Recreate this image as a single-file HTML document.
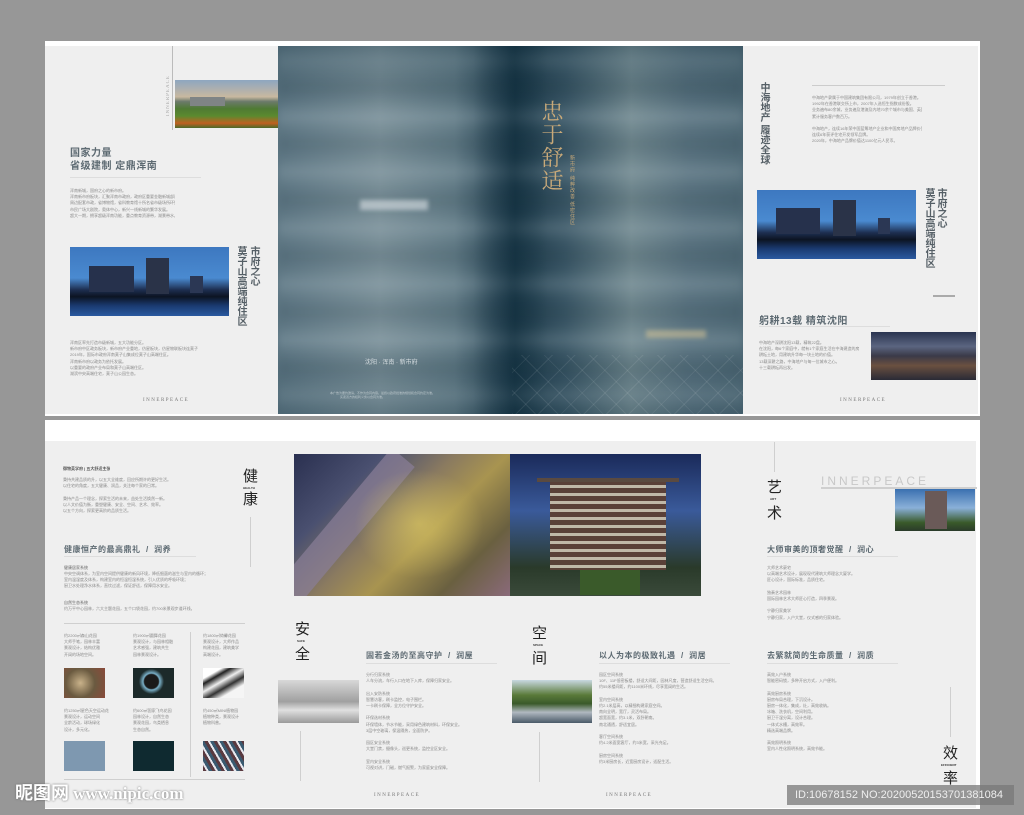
<!DOCTYPE html>
<html><head><meta charset="utf-8"><style>
*{margin:0;padding:0;box-sizing:border-box}
body{width:1024px;height:815px;background:#979797;position:relative;overflow:hidden;font-family:"Liberation Sans","Noto Sans CJK SC",sans-serif}
.a{position:absolute}
.t{position:absolute;font-size:4px;line-height:6.2px;color:#8a8a8a;white-space:nowrap;overflow:hidden}
.h{position:absolute;font-size:9px;color:#5d6a72;font-weight:bold;white-space:nowrap;letter-spacing:.5px}
.v{position:absolute;writing-mode:vertical-rl;color:#555f66;font-weight:bold;font-size:10px;line-height:11px;letter-spacing:0}
.ln{position:absolute;background:#cfcfcf;height:1px}
.vl{position:absolute;background:#cfcfcf;width:1px}
.big{position:absolute;font-size:15px;color:#222;font-family:"Noto Sans CJK SC",sans-serif;line-height:15px}
.logo{position:absolute;font-family:"Liberation Serif",serif;font-size:5px;letter-spacing:1.5px;color:#777}
.sm{position:absolute;font-size:3px;color:#333;font-weight:bold}
</style></head><body>
<div class="a" style="left:45px;top:41px;width:935px;height:375px;background:#fff"></div>
<div class="a" style="left:45px;top:46px;width:933px;height:368px;background:#efefef"></div>
<div class="a" style="left:45px;top:420px;width:935px;height:389px;background:#fff"></div>
<div class="a" style="left:45px;top:441px;width:931px;height:367px;background:#efefef"></div>

<!-- LEFT PAGE -->
<div class="vl" style="left:172px;top:46px;height:84px;background:#bbb"></div>
<div class="a" style="left:166px;top:75px;writing-mode:vertical-rl;transform:rotate(180deg);font-size:5px;color:#aaa;letter-spacing:1px;font-family:'Liberation Serif',serif">INNERPEACE</div>
<div class="a" style="left:175px;top:80px;width:103px;height:48px;background:linear-gradient(180deg,#8ea6c0 0%,#c8b8a0 35%,#6b7a6a 45%,#4f7a33 60%,#5b8a2f 75%,#c06020 90%,#4a6a2a 100%)"></div>
<div class="a" style="left:190px;top:97px;width:35px;height:9px;background:#7f8485"></div>
<div class="h" style="left:70px;top:144px;font-size:10px">国家力量</div>
<div class="h" style="left:70px;top:157px;font-size:10px">省级建制 定鼎浑南</div>
<div class="ln" style="left:70px;top:177px;width:131px;background:#ddd"></div>
<div class="t" style="left:70px;top:188px;width:105px">浑南新城，国府之心的新市府。<br>浑南新市府板块，汇聚浑南市政府，政府区重要金融新城部门机构。<br>周边配套市政，省博物馆，省科教育馆十所名省市级场所环绕。<br>市民广场大剧院，奥体中心，新兴一线新城的繁华发展。<br>超大一期，拥享超级浑南功能，重点教育资源带，湖景带水。</div>
<div class="a" style="left:70px;top:247px;width:159px;height:69px;background:linear-gradient(180deg,#3d78c0 0%,#4a8ad0 45%,#1d2e50 62%,#0c1422 72%,#1a3a70 85%,#2a5aa0 100%)"></div>
<div class="a" style="left:89px;top:266px;width:45px;height:26px;background:#26314c"></div>
<div class="a" style="left:146px;top:258px;width:23px;height:36px;background:#2a3348"></div>
<div class="a" style="left:190px;top:276px;width:13px;height:17px;background:#2b3754"></div>
<div class="v" style="left:248px;top:246px">市府之心</div>
<div class="v" style="left:235px;top:246px">莫子山高端纯住区</div>
<div class="t" style="left:70px;top:340px;width:128px">浑南区率先打造市级新城，五大功能分区。<br>新市府中区政务板块，新市府产业重地，仿星板块，仿星物联板块连莫子山高端住区。<br>2019年，国际市政府浑南莫子山集成位莫子山高端住区。<br>浑南新市府以政务为依托发展。<br>以重要的政府产业布局和莫子山高端住区。<br>湖滨中央高端住宅，莫子山公园生态。</div>
<div class="logo" style="left:143px;top:398px">INNERPEACE</div>

<!-- COVER -->
<div class="a" style="left:278px;top:46px;width:465px;height:368px;overflow:hidden;background:linear-gradient(90deg,#5d7683 0%,#7a8f98 22%,#627b86 38%,#2a4656 49%,#1d3a4a 51%,#3b5766 62%,#71888f 76%,#5a7380 88%,#506a77 100%)">
<div class="a" style="left:0;top:0;width:465px;height:368px;filter:blur(4px);background:repeating-linear-gradient(180deg,rgba(255,255,255,0) 0px,rgba(220,235,240,.14) 14px,rgba(255,255,255,0) 28px,rgba(0,20,30,.1) 42px,rgba(255,255,255,0) 56px);"></div>
<div class="a" style="left:0;top:0;width:465px;height:368px;background:linear-gradient(90deg,rgba(0,0,0,0) 42%,rgba(15,45,60,.45) 50%,rgba(0,0,0,0) 58%)"></div>
<div class="a" style="left:0;top:0;width:465px;height:368px;background:linear-gradient(180deg,rgba(10,40,55,.25),rgba(0,0,0,0) 20%,rgba(0,0,0,0) 80%,rgba(10,40,55,.2))"></div>
</div>
<div class="a" style="left:360px;top:200px;width:68px;height:10px;background:rgba(230,235,238,.55);filter:blur(2px)"></div>
<div class="a" style="left:646px;top:330px;width:60px;height:8px;background:rgba(220,200,150,.5);filter:blur(2px)"></div>
<div class="a" style="left:512px;top:355px;width:231px;height:59px;background:repeating-linear-gradient(45deg,rgba(255,255,255,.08) 0 1px,transparent 1px 16px),repeating-linear-gradient(-45deg,rgba(255,255,255,.08) 0 1px,transparent 1px 16px)"></div>
<div class="a" style="left:540px;top:100px;writing-mode:vertical-rl;font-size:22px;line-height:24px;color:#c8a979;font-family:'Noto Serif CJK SC',serif;letter-spacing:1px">忠于舒适</div>
<div class="a" style="left:569px;top:155px;writing-mode:vertical-rl;font-size:5px;color:#c8a979;letter-spacing:1px">新市府 纯粹改善 低密住区</div>
<div class="a" style="left:365px;top:357px;font-size:6px;color:#d8dfe2">沈阳 · 浑南 · 新市府</div>
<div class="t" style="left:330px;top:391px;color:#bcc7cc;font-size:3px;line-height:4px">本广告为要约邀请，不作为合同内容。最终以政府批准的规划和合同约定为准。<br>&nbsp;&nbsp;&nbsp;&nbsp;&nbsp;&nbsp;&nbsp;&nbsp;&nbsp;&nbsp;&nbsp;&nbsp;买卖双方的权利义务以合同为准。</div>

<!-- RIGHT PAGE -->
<div class="v" style="left:758px;top:82px;font-size:10px;line-height:10px">中海地产 履迹全球</div>
<div class="ln" style="left:812px;top:85px;width:133px;background:#ccc"></div>
<div class="t" style="left:812px;top:95px;width:110px">中海地产隶属于中国建筑集团有限公司，1979年创立于香港。<br>1992年在香港联交所上市，2007年入选恒生指数成份股。<br>业务遍布80余城，业务遍及港澳及内地70余个城市与美国、英国、澳大利亚。<br>累计服务客户数百万。<br><br>中海地产，连续16年荣中国蓝筹地产企业和中国房地产品牌价值第一。<br>连续6年获评住宅开发领军品牌。<br>2020年，中海地产品牌价值达1100亿元人民币。</div>
<div class="a" style="left:757px;top:190px;width:159px;height:69px;background:linear-gradient(180deg,#3d78c0 0%,#4a8ad0 45%,#1d2e50 62%,#0c1422 72%,#1a3a70 85%,#2a5aa0 100%)"></div>
<div class="a" style="left:776px;top:208px;width:44px;height:26px;background:#26314c"></div>
<div class="a" style="left:833px;top:200px;width:23px;height:36px;background:#2a3348"></div>
<div class="a" style="left:878px;top:218px;width:12px;height:16px;background:#2b3754"></div>
<div class="v" style="left:935px;top:188px">市府之心</div>
<div class="v" style="left:923px;top:188px">莫子山高端纯住区</div>
<div class="a" style="left:933px;top:295px;width:22px;height:2px;background:#aaa"></div>
<div class="h" style="left:759px;top:312px;font-size:10px">躬耕13载 精筑沈阳</div>
<div class="ln" style="left:759px;top:326px;width:131px;background:#ddd"></div>
<div class="t" style="left:759px;top:340px;width:100px">中海地产深耕沈阳13载，精筑22盘。<br>在沈阳，每6个家庭中，就有1个家庭生活在中海建造的房子里。<br>耕耘土地，用建筑升华每一块土地的价值。<br>13载深耕之路，中海地产与每一位城市之心。<br>十三载耕耘再出发。</div>
<div class="a" style="left:871px;top:332px;width:105px;height:48px;background:linear-gradient(180deg,#2a3450 0%,#5b6580 30%,#3a3a48 50%,#6a5040 70%,#2a2a36 100%)"></div>
<div class="logo" style="left:840px;top:398px">INNERPEACE</div>

<!-- BOTTOM -->
<div class="t" style="left:63px;top:466px;color:#555;font-size:4px;font-weight:bold">御物美学府 | 五大舒适主张</div>
<div class="t" style="left:63px;top:477px;width:110px">秉持共建品质的升，以五大全维度，回应所期许的更好生活。<br>以住宅的角度，五大健康、润品，关注每个家的日常。<br><br>秉持产品一个理念，探索生活的未来，益处生活焕然一新。<br>以人文价值为衡，重塑健康、安全、空间、艺术、效率。<br>以五个方向，探索更高阶的品质生活。</div>
<div class="big" style="left:243px;top:468px">健</div><div class="sm" style="left:243px;top:486px">HEALTH</div>
<div class="big" style="left:243px;top:491px">康</div>
<div class="vl" style="left:250px;top:517px;height:50px"></div>
<div class="h" style="left:64px;top:544px;font-size:8px">健康恒产的最高鼎礼 &nbsp;/ &nbsp;润养</div>
<div class="ln" style="left:64px;top:556px;width:132px;background:#ddd"></div>
<div class="t" style="left:64px;top:565px;color:#666">健康居家系统</div>
<div class="t" style="left:64px;top:571px;width:145px">中央空调体系，为室内空间提供健康的新风环境，降低细菌的滋生与室内的循环；<br>室内温湿度及体系，构建室内的恒温恒湿系统，引入优质的呼吸环境；<br>厨卫水处理净水体系，直饮过滤，保证舒适，保障用水安全。</div>
<div class="t" style="left:64px;top:600px;color:#666">自然生态系统</div>
<div class="t" style="left:64px;top:606px;width:150px">约万平中心园林，六大主题花园，五个口袋花园，约700米景观步道环线。</div>
<div class="ln" style="left:64px;top:623px;width:181px"></div>
<div class="vl" style="left:190px;top:632px;height:145px"></div>
<div class="t" style="left:64px;top:633px;width:45px">约2200㎡森山花园<br>大师手笔，园林丰富<br>景观设计，结构优雅<br>开阔的场地空间。</div>
<div class="t" style="left:133px;top:633px;width:45px">约1900㎡圆舞花园<br>景观设计，与园林相融<br>艺术感强，建筑共生<br>园林景观设计。</div>
<div class="t" style="left:203px;top:633px;width:45px">约1800㎡倚馨花园<br>景观设计，大师作品<br>构建花园，建筑美学<br>高端设计。</div>
<div class="a" style="left:64px;top:668px;width:41px;height:30px;background:radial-gradient(circle at 40% 50%,#c9b28a,#6a5a40 50%,#8a4a3a)"></div>
<div class="a" style="left:133px;top:668px;width:41px;height:30px;background:radial-gradient(circle at 45% 45%,#1a1a1a 25%,#7ab0c8 30%,#1c2a2a 45%)"></div>
<div class="a" style="left:203px;top:668px;width:41px;height:30px;background:linear-gradient(150deg,#fff 20%,#222 30%,#eee 45%,#333 60%,#f5f5f5 75%)"></div>
<div class="t" style="left:64px;top:708px;width:45px">约1250㎡星色天空运动花园<br>景观设计，运动空间<br>全龄活动，球场绿化<br>设计，多元化。</div>
<div class="t" style="left:133px;top:708px;width:45px">约600㎡国家飞鸟花园<br>园林设计，自然生态<br>景观花园，鸟类栖息<br>生态自然。</div>
<div class="t" style="left:203px;top:708px;width:45px">约450㎡MINI植物园<br>植物种类，景观设计<br>植物科普。</div>
<div class="a" style="left:64px;top:741px;width:41px;height:30px;background:#7e98b0"></div>
<div class="a" style="left:133px;top:741px;width:41px;height:30px;background:#0f2a30"></div>
<div class="a" style="left:203px;top:741px;width:41px;height:30px;background:repeating-linear-gradient(60deg,#5a3a40 0 3px,#e8e8ee 3px 5px,#3a5a70 5px 8px)"></div>
<div class="ln" style="left:64px;top:779px;width:181px"></div>

<div class="a" style="left:294px;top:454px;width:216px;height:142px;overflow:hidden;background:linear-gradient(135deg,#2a3050 0%,#4a5070 25%,#8a7a60 45%,#a89450 60%,#6a6040 80%,#8a6a7a 100%)">
<div class="a" style="left:30px;top:-20px;width:30px;height:200px;background:#8a7f98;transform:rotate(40deg);opacity:.7"></div>
<div class="a" style="left:60px;top:15px;width:130px;height:110px;background:radial-gradient(ellipse at center,rgba(220,200,100,.65),rgba(0,0,0,0) 70%)"></div>
</div>
<div class="a" style="left:510px;top:454px;width:191px;height:142px;background:linear-gradient(180deg,#1a2a5a 0%,#3a5a9a 40%,#2a3a2a 80%,#3a4a3a 100%)"></div>
<div class="a" style="left:550px;top:480px;width:116px;height:90px;background:repeating-linear-gradient(180deg,#5a4038 0 5px,#c0b8a8 5px 8px)"></div>
<div class="a" style="left:537px;top:478px;width:142px;height:4px;background:#5a4a40"></div>
<div class="a" style="left:580px;top:570px;width:60px;height:25px;background:#3a5a2a"></div>

<div class="big" style="left:295px;top:621px">安</div><div class="sm" style="left:297px;top:639px">SAFE</div>
<div class="big" style="left:295px;top:646px">全</div>
<div class="vl" style="left:300px;top:731px;height:50px"></div>
<div class="a" style="left:278px;top:680px;width:81px;height:43px;background:linear-gradient(180deg,#d8d8d8,#a0a0a0 50%,#e0e0e0 70%,#9a9a9a)"></div>
<div class="h" style="left:366px;top:650px;font-size:8px">固若金汤的至高守护 &nbsp;/ &nbsp;润屋</div>
<div class="ln" style="left:366px;top:663px;width:131px;background:#ddd"></div>
<div class="t" style="left:366px;top:672px;width:130px">分行归家系统<br>人车分流，车行入口在地下入库，保障归家安全。<br><br>出入安防系统<br>智慧访客，刷卡监控，电子围栏。<br>一卡刷卡保障，全方位守护安全。<br><br>环保选材系统<br>环保墙体，节水节能，采用绿色建筑材料，环保安全。<br>3层中空玻璃，保温隔热，全面防护。<br><br>园区安全系统<br>大堂门禁，摄像头，巡更系统，监控全区安全。<br><br>室内安全系统<br>可视对讲，门磁，燃气报警，为家庭安全保障。</div>
<div class="logo" style="left:374px;top:793px">INNERPEACE</div>

<div class="big" style="left:532px;top:625px">空</div><div class="sm" style="left:533px;top:643px">SPACE</div>
<div class="big" style="left:532px;top:650px">间</div>
<div class="a" style="left:512px;top:680px;width:80px;height:43px;background:linear-gradient(180deg,#c8d8e0 0%,#5a7a3a 35%,#3a5a2a 55%,#b0b8c0 75%,#4a5a68)"></div>
<div class="vl" style="left:539px;top:732px;height:50px"></div>
<div class="h" style="left:599px;top:650px;font-size:8px">以人为本的极致礼遇 &nbsp;/ &nbsp;润居</div>
<div class="ln" style="left:599px;top:663px;width:131px;background:#ddd"></div>
<div class="t" style="left:599px;top:672px;width:130px">园区空间系统<br>10F、11F低密板楼，舒适大间距，园林尺度，营造舒适生活空间。<br>约55米楼间距，约1100米环线，尽享宽阔的生活。<br><br>室内空间系统<br>约2.1米层高，以精细构建家庭空间。<br>南向全明，宽厅，灵活布局。<br>超宽面宽，约3.1米，双卧朝南。<br>南北通透，舒适宜居。<br><br>客厅空间系统<br>约4.2米面宽客厅，约3米宽，采光充足。<br><br>厨房空间系统<br>约3米厨房长，近宽厨房设计，适配生活。</div>
<div class="logo" style="left:606px;top:793px">INNERPEACE</div>

<div class="vl" style="left:774px;top:442px;height:30px"></div>
<div class="big" style="left:767px;top:479px">艺</div><div class="sm" style="left:770px;top:497px">ART</div>
<div class="big" style="left:767px;top:505px">术</div>
<div class="a" style="left:821px;top:474px;font-size:12px;letter-spacing:3px;color:#c8c8c8;font-family:'Liberation Sans',sans-serif">INNERPEACE</div>
<div class="a" style="left:821px;top:487px;width:156px;height:2px;background:#cfcfcf"></div>
<div class="a" style="left:895px;top:489px;width:80px;height:42px;background:linear-gradient(180deg,#3a70b0 0%,#8ab0d8 45%,#3a5a2a 80%,#2a3a2a)"></div>
<div class="a" style="left:925px;top:491px;width:22px;height:38px;background:#6a5a58"></div>
<div class="h" style="left:767px;top:544px;font-size:8px">大师审美的顶奢觉醒 &nbsp;/ &nbsp;润心</div>
<div class="ln" style="left:767px;top:556px;width:131px;background:#ddd"></div>
<div class="t" style="left:767px;top:565px;width:130px">大师艺术豪宅<br>以高端艺术设计，展现现代建筑大师理念大厦学。<br>匠心设计，国际标准，品质住宅。<br><br>独奏艺术园林<br>国际园林艺术大师匠心打造，四季景观。<br><br>宁静归家美学<br>宁静归家，入户大堂，仪式感的归家体验。</div>
<div class="h" style="left:767px;top:650px;font-size:8px">去繁就简的生命质量 &nbsp;/ &nbsp;润质</div>
<div class="ln" style="left:767px;top:663px;width:131px;background:#ddd"></div>
<div class="t" style="left:767px;top:672px;width:130px">高效入户系统<br>智能密码锁，多种开启方式，入户便利。<br><br>高效厨房系统<br>厨房布局合理，下沉设计。<br>厨房一体化，集成，灶，高效收纳。<br>冰箱、洗衣机，空间利用。<br>厨卫干湿分离，设计合理。<br>一体式水槽，高效率。<br>精选高端品牌。<br><br>高效照明系统<br>室内人性化照明系统，高效节能。</div>
<div class="vl" style="left:950px;top:687px;height:50px"></div>
<div class="big" style="left:943px;top:745px">效</div><div class="sm" style="left:941px;top:763px">EFFICIENT</div>
<div class="big" style="left:943px;top:770px">率</div>

<div class="a" style="left:15px;top:781px;font-size:18px;font-weight:bold;color:#fff;text-shadow:0 0 2px #666;font-family:'Noto Sans CJK SC',sans-serif;line-height:22px">昵图网 <span style="font-family:'Liberation Serif',serif;font-size:17px">www.nipic.com</span></div>
<div class="a" style="left:787px;top:785px;width:227px;height:20px;background:rgba(120,120,120,.75);color:#eee;font-size:11px;line-height:20px;padding-left:8px">ID:10678152 NO:20200520153701381084</div>
</body></html>
